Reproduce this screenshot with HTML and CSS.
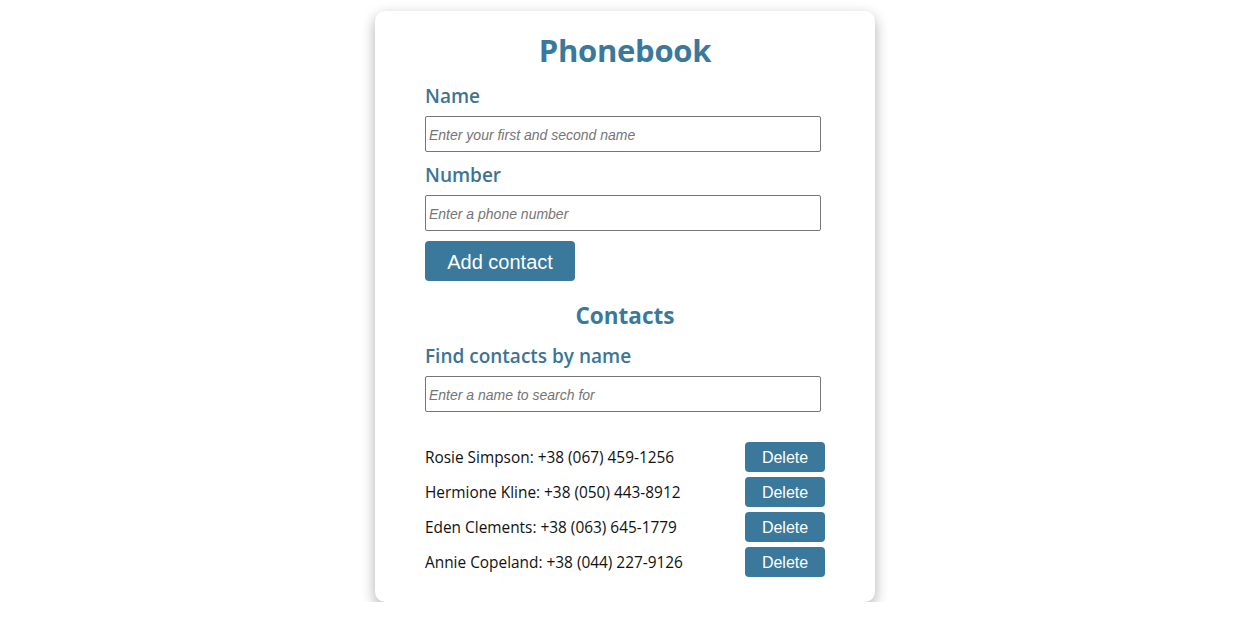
FILE: index.html
```html
<!DOCTYPE html>
<html lang="en">
<head>
<meta charset="utf-8">
<title>Phonebook</title>
<link rel="stylesheet" href="styles.css">
</head>
<body>
<div class="card">
  <h1 class="title">Phonebook</h1>
  <form class="form">
    <label class="label" for="name">Name</label>
    <input class="input" id="name" type="text" placeholder="Enter your first and second name">
    <label class="label label-second" for="number">Number</label>
    <input class="input" id="number" type="tel" placeholder="Enter a phone number">
    <button class="add-btn" type="button">Add contact</button>
  </form>
  <h2 class="subtitle">Contacts</h2>
  <label class="label filter-label" for="filter">Find contacts by name</label>
  <input class="input" id="filter" type="text" placeholder="Enter a name to search for">
  <ul class="list">
    <li class="item"><span class="contact">Rosie Simpson: +38 (067) 459-1256</span><button class="del-btn" type="button">Delete</button></li>
    <li class="item"><span class="contact">Hermione Kline: +38 (050) 443-8912</span><button class="del-btn" type="button">Delete</button></li>
    <li class="item"><span class="contact">Eden Clements: +38 (063) 645-1779</span><button class="del-btn" type="button">Delete</button></li>
    <li class="item"><span class="contact">Annie Copeland: +38 (044) 227-9126</span><button class="del-btn" type="button">Delete</button></li>
  </ul>
</div>
</body>
</html>
```
FILE: styles.css
```css
* { box-sizing: border-box; }
body {
  margin: 0;
  padding-left: 4px;
  background: #fff;
  font-family: "Open Sans", "Noto Sans", sans-serif;
}
.card {
  width: 500px;
  margin: 11px auto 0;
  padding: 19px 50px 25px;
  background: #fff;
  border-radius: 10px;
  box-shadow: 0 5px 14px rgba(0, 0, 0, 0.32);
  display: flex;
  flex-direction: column;
}
.title {
  margin: 0;
  font-size: 31px;
  line-height: 40px;
  font-weight: 700;
  color: #3a799b;
  text-align: center;
  letter-spacing: -0.3px;
}
.form {
  display: flex;
  flex-direction: column;
  align-items: flex-start;
  margin-top: 14px;
}
.label {
  display: block;
  font-size: 19px;
  line-height: 24px;
  font-weight: 600;
  color: #3d7495;
  margin-bottom: 8px;
}
.label-second { margin-top: 11px; }
.input {
  display: block;
  width: 396px;
  height: 36px;
  border: 1px solid #767676;
  border-radius: 2px;
  padding: 2px 3px 0;
  font-family: "Liberation Sans", Arial, sans-serif;
  font-size: 14px;
  outline: none;
}
.input::placeholder {
  font-style: italic;
  color: #757575;
}
.add-btn {
  margin-top: 10px;
  width: 150px;
  height: 40px;
  border: none;
  border-radius: 4px;
  background: #3a799b;
  color: #fff;
  font-family: "Liberation Sans", Arial, sans-serif;
  font-size: 20px;
  padding: 2px 0 0;
}
.subtitle {
  margin: 20px 0 0;
  font-size: 22.5px;
  line-height: 30px;
  font-weight: 700;
  color: #3a799b;
  text-align: center;
}
.filter-label { margin-top: 13px; }
.list {
  list-style: none;
  margin: 30px 0 0;
  padding: 0;
  display: flex;
  flex-direction: column;
  gap: 5px;
}
.item {
  display: flex;
  justify-content: space-between;
  align-items: center;
  height: 30px;
}
.contact {
  font-size: 15.4px;
  color: #111;
}
.del-btn {
  width: 80px;
  height: 30px;
  border: none;
  border-radius: 4px;
  background: #3a799b;
  color: #fff;
  font-family: "Liberation Sans", Arial, sans-serif;
  font-size: 16px;
  padding: 2px 0 0;
}
```
